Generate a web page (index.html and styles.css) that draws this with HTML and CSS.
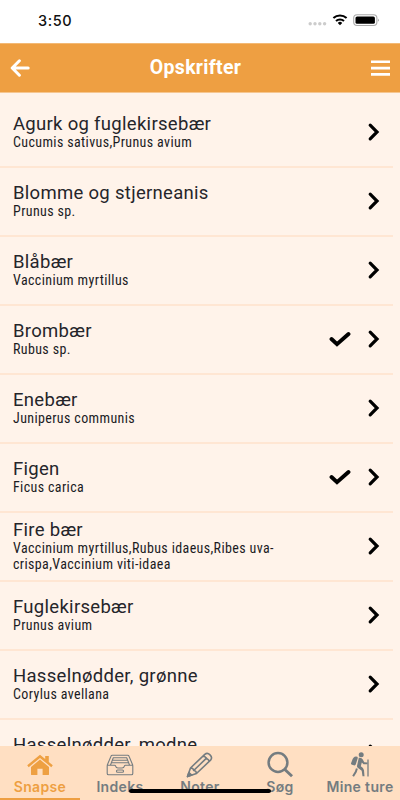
FILE: index.html
```html
<!DOCTYPE html>
<html lang="da">
<head>
<meta charset="utf-8">
<title>Opskrifter</title>
<link rel="stylesheet" href="styles.css">
</head>
<body>
<svg class="defs" aria-hidden="true">
  <symbol id="chev" viewBox="0 0 14 20"><path d="M3.2 3.2 10 10l-6.8 6.8" fill="none" stroke="#000" stroke-width="3.2" stroke-linecap="round"/></symbol>
  <symbol id="check" viewBox="0 0 22 16"><path d="M2.500 8 8 13.200 19.500 3" fill="none" stroke="#000" stroke-width="3.900" stroke-linecap="round"/></symbol>
</svg>
<div class="screen">
  <div class="status">
    <span class="time">3:50</span>
    <svg class="signals" width="74" height="16" viewBox="0 0 74 16">
      <g fill="#ccc"><circle cx="4.2" cy="11.7" r="1.7"/><circle cx="9" cy="11.7" r="1.7"/><circle cx="13.8" cy="11.7" r="1.7"/><circle cx="18.6" cy="11.7" r="1.7"/></g>
      <g fill="none" stroke="#000" stroke-width="2"><path d="M27.4 6.100a9.600 9.600 0 0 1 13.200 0"/><path d="M30 9a5.800 5.800 0 0 1 8 0"/></g>
      <path d="M31.800 10.900a3.200 3.200 0 0 1 4.400 0L34 13.200z"/>
      <rect x="47.700" y="2.700" width="23.200" height="10.800" rx="3.400" fill="#fff" stroke="#aaa" stroke-width="1.100"/>
      <rect x="49.500" y="4.400" width="19.400" height="7.400" rx="1.600"/>
      <path d="M72.200 6.400q1.400 1.600 0 3.400z" fill="#777"/>
    </svg>
  </div>
  <header class="bar">
    <svg width="20" height="18" viewBox="0 0 20 18"><path d="M9.400 1.800 2.200 9l7.200 7.200M2.600 9h15.600" fill="none" stroke="#fff" stroke-width="3" stroke-linecap="round" stroke-linejoin="round"/></svg>
    <h1>Opskrifter</h1>
    <svg width="19" height="16" viewBox="0 0 19 16"><path d="M0 1.800h19M0 8.100h19M0 14.400h19" stroke="#fff" stroke-width="2.600"/></svg>
  </header>
  <main class="list">
    <div class="row"><div class="txt"><h2>Agurk og fuglekirsebær</h2><p>Cucumis sativus,Prunus avium</p></div><svg class="chev"><use href="#chev"/></svg></div>
    <div class="row"><div class="txt"><h2>Blomme og stjerneanis</h2><p>Prunus sp.</p></div><svg class="chev"><use href="#chev"/></svg></div>
    <div class="row"><div class="txt"><h2>Blåbær</h2><p>Vaccinium myrtillus</p></div><svg class="chev"><use href="#chev"/></svg></div>
    <div class="row"><div class="txt"><h2>Brombær</h2><p>Rubus sp.</p></div><svg class="check"><use href="#check"/></svg><svg class="chev"><use href="#chev"/></svg></div>
    <div class="row"><div class="txt"><h2>Enebær</h2><p>Juniperus communis</p></div><svg class="chev"><use href="#chev"/></svg></div>
    <div class="row"><div class="txt"><h2>Figen</h2><p>Ficus carica</p></div><svg class="check"><use href="#check"/></svg><svg class="chev"><use href="#chev"/></svg></div>
    <div class="row"><div class="txt"><h2>Fire bær</h2><p>Vaccinium myrtillus,Rubus idaeus,Ribes uva-<br>crispa,Vaccinium viti-idaea</p></div><svg class="chev"><use href="#chev"/></svg></div>
    <div class="row"><div class="txt"><h2>Fuglekirsebær</h2><p>Prunus avium</p></div><svg class="chev"><use href="#chev"/></svg></div>
    <div class="row"><div class="txt"><h2>Hasselnødder, grønne</h2><p>Corylus avellana</p></div><svg class="chev"><use href="#chev"/></svg></div>
    <div class="row"><div class="txt"><h2>Hasselnødder, modne</h2><p>Corylus avellana</p></div><svg class="chev"><use href="#chev"/></svg></div>
  </main>
  <nav class="tabs">
    <div class="tab active">
      <svg width="28" height="28" viewBox="0 0 28 28" fill="#eea042"><path d="M14 8.600 23 16v7.200q0 .9-.9.9H16.600v-6.300h-5.200v6.300H5.900q-.9 0-.9-.9V16z"/><path d="M14 3.700 19.200 8V5h3.600v6l4 3.300-1.500 1.900L14 6.900 2.700 16.200l-1.500-1.900z"/></svg>
      <span>Snapse</span>
    </div>
    <div class="tab">
      <svg width="28" height="28" viewBox="0 0 28 28" fill="none" stroke="#747c80" stroke-width="1.100" stroke-linejoin="round"><path d="M1.200 14.200h7.400q.8 0 1 .9.500 1.900 2.300 1.900h4.200q1.800 0 2.300-1.900.2-.9 1-.9h7.400v8.200q0 1.300-1.300 1.300h-23q-1.300 0-1.300-1.300zL5 5.200q.3-.9 1.300-.9h15.400q1 0 1.300.9l3.800 9M7 6.800h14M6 9.200h16M5 11.700h18M7.300 6.800 4.500 14M20.700 6.800l2.800 7.200"/><rect x="10.500" y="19" width="7" height="2.200" rx="1"/></svg>
      <span>Indeks</span>
    </div>
    <div class="tab">
      <svg width="28" height="28" viewBox="0 0 28 28" fill="none" stroke="#747c80" stroke-width="1.600" stroke-linejoin="round"><path d="M1.500 25.600 4.500 17 18.800 3.300q2.600-2 5.200.5t.8 5.100L10.500 22.500zM4.500 17q3.200.2 3.200 2.500 2.500 0 2.800 3M7.700 19.500 21 6.700M17 5.200q3 .2 3.200 2.600 2.400 0 2.900 2.900"/><path d="m1.500 25.600 1.400-4 2.800 2.500z" fill="#747c80"/></svg>
      <span>Noter</span>
    </div>
    <div class="tab">
      <svg width="28" height="28" viewBox="0 0 28 28" fill="none" stroke="#747c80" stroke-width="2.500"><circle cx="12" cy="11.500" r="9.400"/><path d="m18.600 18.200 7.400 7" stroke-width="2.900"/></svg>
      <span>Søg</span>
    </div>
    <div class="tab">
      <svg width="28" height="28" viewBox="0 0 28 28"><g fill="#747c80"><circle cx="15.200" cy="3.800" r="2.500"/><path d="M10 5.500q-3 .3-4 4.200l-1 2.500q-.2 1.200 1 1.500l2.700.7q.7 0 1-.8L11.800 7q.2-1.400-1.800-1.500z"/><path d="M12.800 6.800q2.700-.7 3.800 1.500l1.700 3 3.200.3v1.700l-4-.1-1.700-1.700-1 3.700q2.800 1.300 3.200 4l.5 6h-2l-.8-5.400-4-3.100q-1-.8-.6-2.200z"/></g><path d="m10.900 17.500-1.100 3.300-2.700 4.400" fill="none" stroke="#747c80" stroke-width="2"/><path d="M22 8.500v17" fill="none" stroke="#747c80" stroke-width="1.300"/></svg>
      <span>Mine ture</span>
    </div>
    <div class="home"></div>
  </nav>
</div>
</body>
</html>
```

FILE: styles.css
```css
* { box-sizing: border-box; }
body { margin: 0; font-family: Roboto, "Liberation Sans", sans-serif; background: #fff3ea; }
h1, h2, p { margin: 0; }
.defs { display: none; }
.screen { position: relative; width: 400px; height: 800px; overflow: hidden; }
.status { height: 43px; padding: 12px 20px 0 38px; display: flex; justify-content: space-between; background: #fff; }
.time { font: 500 14.500px/17px Inter, sans-serif; letter-spacing: .6px; color: #111; }
.bar { height: 50px; padding: 0 10px; display: flex; align-items: center; justify-content: space-between; background: #ee9f42; border-top: 1px solid #f3b975; border-bottom: 1px solid #f6c690; }
.bar h1 { margin-right: 10px; font-size: 19.500px; font-weight: 700; line-height: 24px; color: #fff; letter-spacing: .3px; }
.list { padding: 6px 7px 0 0; }
.row { height: 69px; display: flex; align-items: center; padding: 0 12px 2px 13px; border-bottom: 2px solid #ffe6d3; }
.txt { flex: 1; }
.txt h2 { margin-bottom: -2px; font-size: 18.500px; font-weight: 400; line-height: 23px; letter-spacing: .3px; color: #25252a; white-space: nowrap; }
.txt p { font-family: "Roboto Condensed", Roboto, sans-serif; font-stretch: 75%; font-size: 14px; font-weight: 400; line-height: 16px; letter-spacing: .37px; color: #1b1b1f; white-space: nowrap; }
.chev { width: 14px; height: 20px; }
.check { width: 22px; height: 16px; margin-right: 16px; }
.tabs { position: absolute; left: 0; right: 0; bottom: 0; height: 54px; display: grid; grid-template-columns: repeat(5, 80px); background: #ffdfc2; }
.tab { display: flex; flex-direction: column; align-items: center; padding-top: 5px; border-bottom: 2px solid transparent; font-family: Inter, sans-serif; font-size: 14px; font-weight: 600; line-height: 16px; letter-spacing: .35px; color: #747c80; white-space: nowrap; }
.tab.active { color: #ee9f42; border-color: #ee9f42; }
.home { position: absolute; left: 129px; top: 43px; width: 142px; height: 4px; border-radius: 2px; background: #000; }
```
